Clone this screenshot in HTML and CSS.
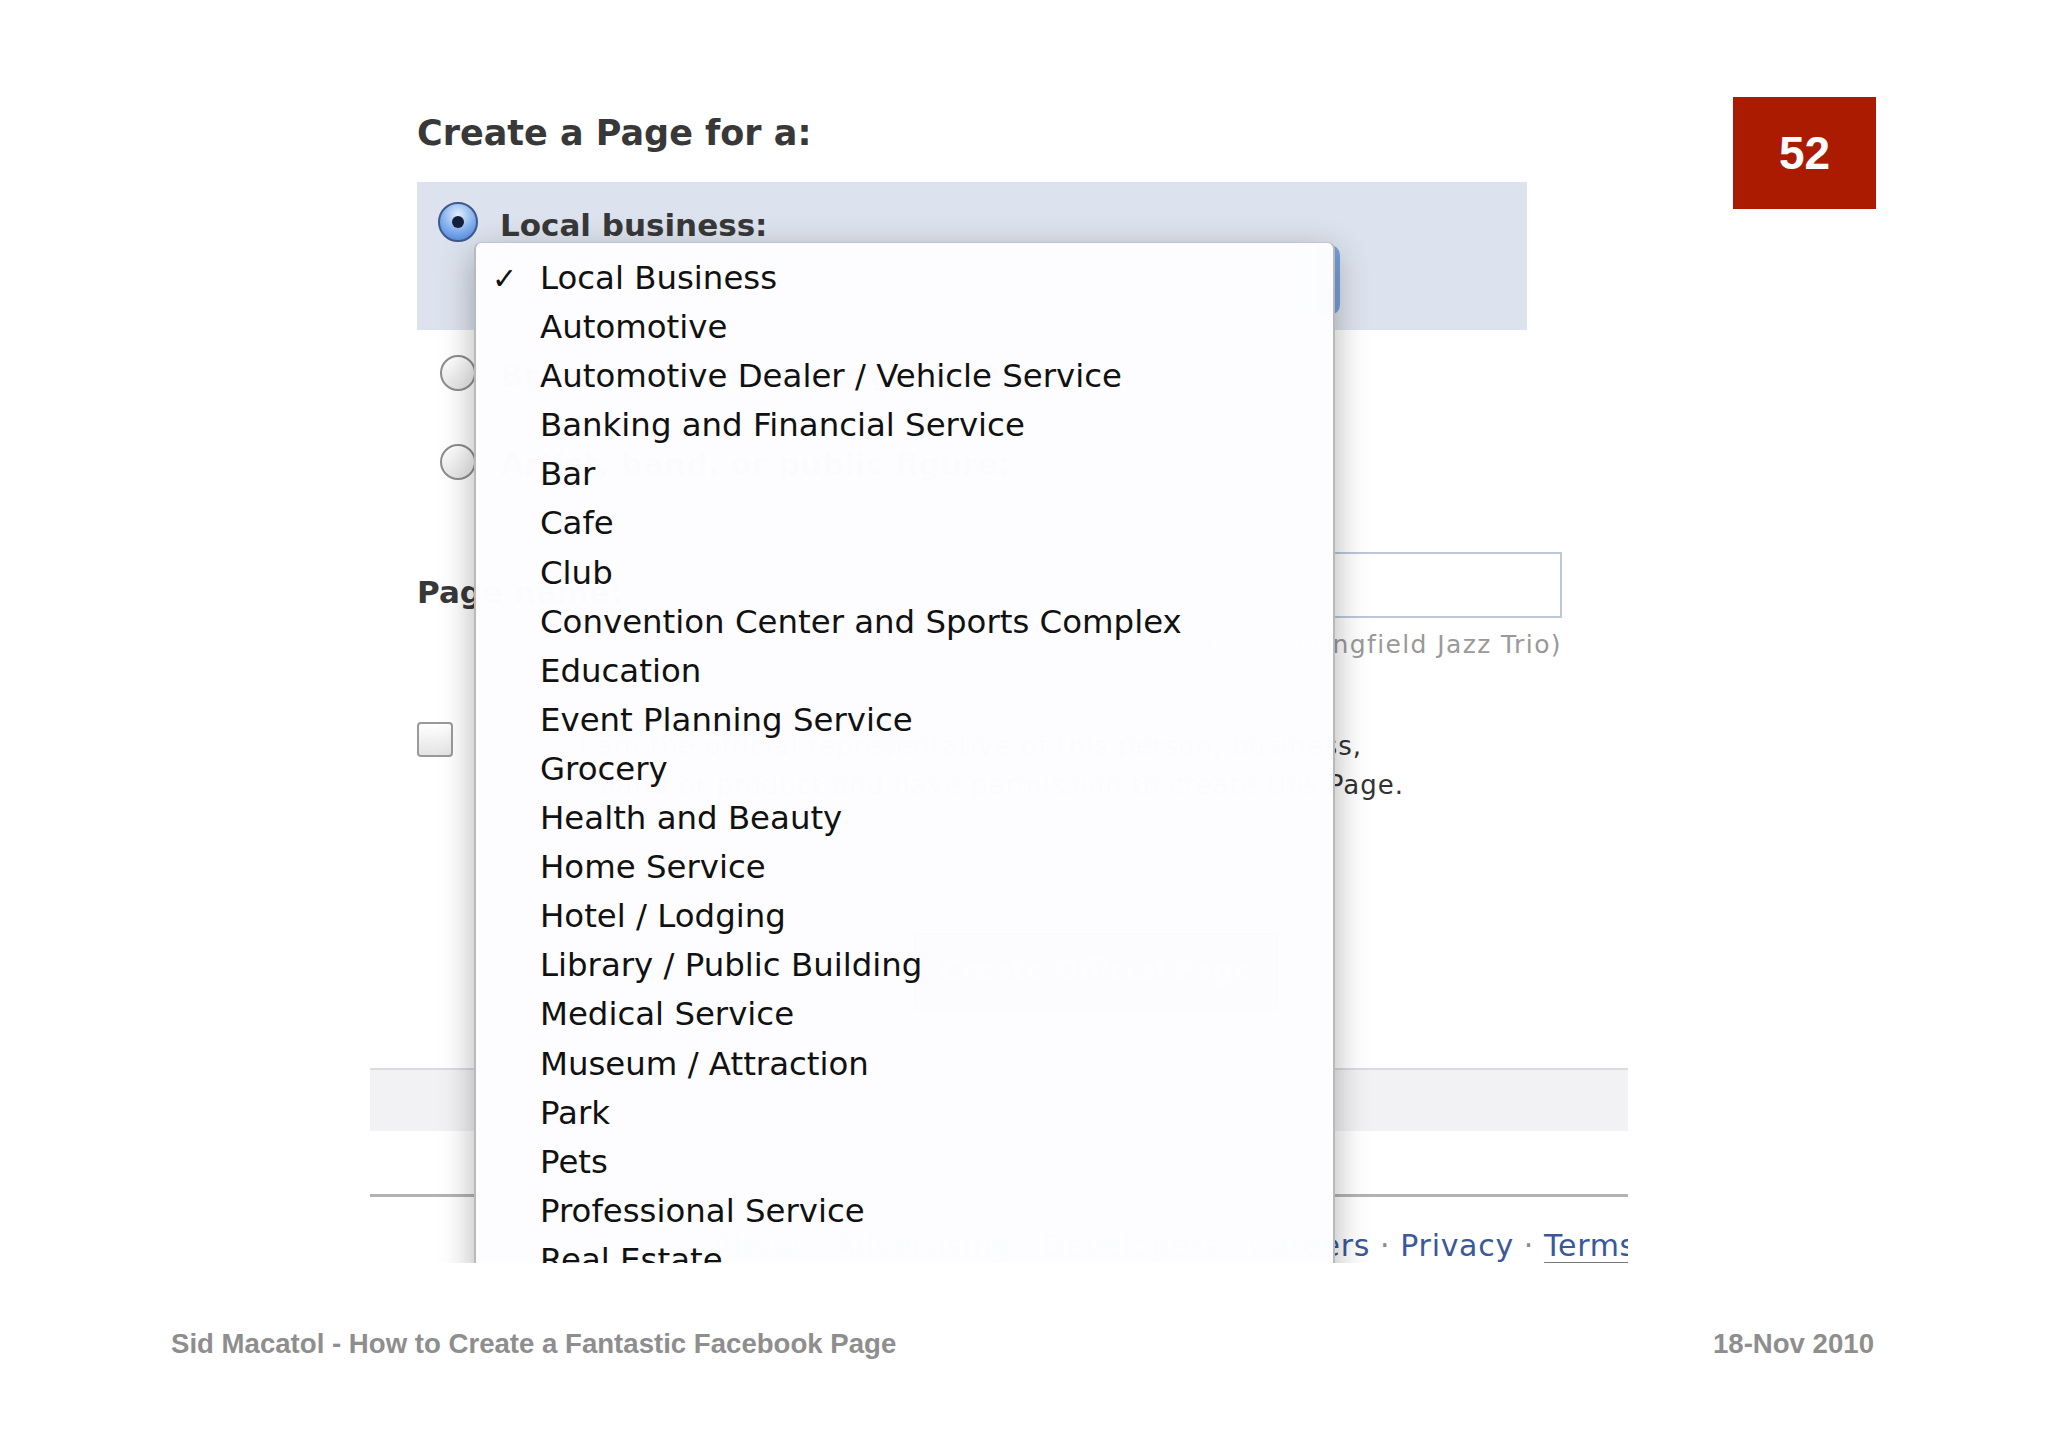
FILE: index.html
```html
<!DOCTYPE html>
<html lang="en">
<head>
<meta charset="utf-8">
<title>Create a Page for a</title>
<link rel="stylesheet" href="styles.css">
</head>
<body>
<div class="slide">
  <div class="shot">
    <div class="page-body">
      <h1 class="title">Create a Page for a:</h1>

      <div class="opt-selected">
        <div class="opt-row">
          <span class="radio radio-on"></span>
          <span class="opt-label">Local business:</span>
        </div>
        <div class="select"></div>
      </div>

      <div class="opt opt-first">
        <span class="radio"></span>
        <span class="opt-label">Brand, product, or organization:</span>
      </div>
      <div class="opt opt-second">
        <span class="radio"></span>
        <span class="opt-label">Artist, band, or public figure:</span>
      </div>

      <div class="field">
        <span class="field-label">Page name:</span>
        <div class="field-wrap">
          <div class="input"></div>
          <div class="hint">(e.g. Springfield Jazz Trio)</div>
        </div>
      </div>

      <div class="check-row">
        <span class="checkbox"></span>
        <div class="check-text">
          <span class="line line-1">I am the official representative of this person, business,</span>
          <span class="line line-2">band or product and have permission to create this Page.</span>
        </div>
      </div>

      <div class="button-row"><span class="btn">Create Official Page</span></div>
    </div>

    <div class="fb-band"></div>
    <div class="fb-rule"></div>
    <div class="fb-links">
      <a>About</a><span class="sep">·</span>
      <a>Advertising</a><span class="sep">·</span>
      <a>Developers</a><span class="sep">·</span>
      <a>Careers</a><span class="sep">·</span>
      <a>Privacy</a><span class="sep">·</span>
      <a class="u">Terms</a><span class="sep">·</span>
      <a>Help</a>
    </div>

    <ul class="menu">
      <li class="checked"><span class="check">✓</span>Local Business</li>
      <li>Automotive</li>
      <li>Automotive Dealer / Vehicle Service</li>
      <li>Banking and Financial Service</li>
      <li>Bar</li>
      <li>Cafe</li>
      <li>Club</li>
      <li>Convention Center and Sports Complex</li>
      <li>Education</li>
      <li>Event Planning Service</li>
      <li>Grocery</li>
      <li>Health and Beauty</li>
      <li>Home Service</li>
      <li>Hotel / Lodging</li>
      <li>Library / Public Building</li>
      <li>Medical Service</li>
      <li>Museum / Attraction</li>
      <li>Park</li>
      <li>Pets</li>
      <li>Professional Service</li>
      <li>Real Estate</li>
      <li>Religious Organization</li>
      <li>Restaurant</li>
    </ul>
  </div>

  <div class="badge">52</div>

  <div class="slide-footer">
    <span>Sid Macatol - How to Create a Fantastic Facebook Page</span>
    <span>18-Nov 2010</span>
  </div>
</div>
</body>
</html>
```

FILE: styles.css
```css
html, body {
  margin: 0;
  padding: 0;
  background: #ffffff;
}

.slide {
  position: relative;
  width: 2048px;
  height: 1447px;
  padding-top: 60px;
  box-sizing: border-box;
  background: #ffffff;
}

/* ---------- screenshot region ---------- */
.shot {
  position: relative;
  margin-left: 370px;
  width: 1258px;
  height: 1203px;
  overflow: hidden;
  background: #ffffff;
  font-family: "DejaVu Sans", "Liberation Sans", sans-serif;
  color: #333333;
}

.page-body {
  padding: 52px 0 0 47px;
}

.title {
  margin: 0;
  font-size: 35px;
  line-height: 42px;
  font-weight: bold;
  color: #383838;
}

.opt-selected {
  margin-top: 28px;
  width: 1110px;
  height: 148px;
  box-sizing: border-box;
  padding: 20px 0 0 21px;
  background: #dde3ee;
}

.opt-row {
  display: flex;
  align-items: flex-start;
  gap: 22px;
  height: 40px;
}

.opt-label {
  font-size: 31px;
  line-height: 40px;
  font-weight: bold;
  color: #383838;
  margin-top: 3px;
  white-space: nowrap;
}

.radio {
  position: relative;
  flex: none;
  width: 36px;
  height: 36px;
  box-sizing: border-box;
  border-radius: 50%;
  border: 2px solid #8d8d8d;
  background: linear-gradient(#ffffff, #e6e6e6);
}

.radio-on {
  width: 40px;
  height: 40px;
  border: 2px solid #3d5a8c;
  background: radial-gradient(circle at 50% 30%, #e3eefc 0, #8fb8f0 45%, #3f7ad8 100%);
}

.radio-on::after {
  content: "";
  position: absolute;
  left: 50%;
  top: 50%;
  width: 12px;
  height: 12px;
  margin: -6px 0 0 -6px;
  border-radius: 50%;
  background: #14203a;
}

.select {
  margin: 3px 0 0 36px;
  width: 866px;
  height: 70px;
  border-radius: 10px;
  background: linear-gradient(to right, #ffffff 0, #ffffff calc(100% - 40px), #8fb3e8 calc(100% - 40px), #76a0de 100%);
}

.opt {
  display: flex;
  align-items: center;
  gap: 24px;
  padding-left: 23px;
  height: 36px;
}

.opt-first { margin-top: 25px; }
.opt-second { margin-top: 53px; }

/* ---------- page name ---------- */
.field {
  display: flex;
  align-items: flex-start;
  margin-top: 72px;
}

.field-label {
  font-size: 31px;
  line-height: 40px;
  font-weight: bold;
  color: #383838;
  margin-top: 20px;
  white-space: nowrap;
}

.field-wrap {
  margin-left: auto;
  margin-right: 66px;
  width: 860px;
}

.input {
  height: 66px;
  box-sizing: border-box;
  border: 2px solid #bdc7d8;
  background: #ffffff;
}

.hint {
  margin-top: 12px;
  font-size: 25px;
  line-height: 30px;
  letter-spacing: 1.4px;
  color: #999999;
  text-align: right;
}

/* ---------- checkbox ---------- */
.check-row {
  display: flex;
  align-items: flex-start;
  margin-top: 62px;
}

.checkbox {
  flex: none;
  width: 36px;
  height: 35px;
  box-sizing: border-box;
  border: 2px solid #9a9a9a;
  border-radius: 4px;
  background: linear-gradient(#ffffff, #e4e4e4);
}

.check-text {
  margin: 5px 0 0 30px;
  width: 921px;
  font-size: 26px;
  line-height: 39px;
  letter-spacing: 1px;
  color: #333333;
}

.line {
  display: block;
  text-align: right;
  white-space: nowrap;
}

.line-1 { padding-right: 42px; }

.button-row {
  margin: 128px 0 0 497px;
}

.btn {
  display: inline-block;
  padding: 0 24px;
  height: 72px;
  line-height: 72px;
  font-size: 28px;
  font-weight: bold;
  color: #ffffff;
  background: #5b74a8;
  border: 2px solid #29447e;
}

/* ---------- facebook footer ---------- */
.fb-band {
  margin-top: 59px;
  height: 63px;
  box-sizing: border-box;
  border-top: 2px solid #dcdcdf;
  background: #f2f2f5;
}

.fb-rule {
  margin-top: 63px;
  height: 3px;
  background: #b3b3b3;
}

.fb-links {
  display: flex;
  margin-top: 31px;
  padding-left: 342px;
  font-size: 30px;
  line-height: 36px;
  letter-spacing: 0.7px;
  white-space: nowrap;
  color: #3b5998;
}

.fb-links a { color: #3b5998; }
.fb-links .u {
  text-decoration: underline;
  text-decoration-color: #7a7a7a;
  text-underline-offset: 6px;
}
.fb-links .sep {
  padding: 0 10px;
  color: #8a8a8a;
}

/* ---------- popup menu ---------- */
.menu {
  position: absolute;
  left: 104px;
  top: 182px;
  width: 861px;
  margin: 0;
  padding: 11px 0 0 0;
  box-sizing: border-box;
  list-style: none;
  background: rgba(253, 253, 255, 0.992);
  border: 2px solid #b9b9b9;
  border-top: 1px solid #c6c6c6;
  border-radius: 7px 7px 0 0;
  box-shadow: 0 10px 34px rgba(0, 0, 0, 0.3);
}

.menu li {
  position: relative;
  padding-left: 64px;
  height: 49.1px;
  line-height: 49.1px;
  font-size: 32.4px;
  color: #111111;
  white-space: nowrap;
}

.menu .check {
  position: absolute;
  left: 16px;
  top: 0;
  font-size: 30px;
  font-weight: bold;
  color: #111111;
}

/* ---------- slide chrome ---------- */
.badge {
  position: absolute;
  left: 1733px;
  top: 97px;
  width: 143px;
  height: 112px;
  background: #ab1b02;
  color: #ffffff;
  font-family: "Liberation Sans", Arial, sans-serif;
  font-weight: bold;
  font-size: 46px;
  line-height: 112px;
  text-align: center;
}

.slide-footer {
  display: flex;
  justify-content: space-between;
  margin-top: 65px;
  padding: 0 174px 0 171px;
  font-family: "Liberation Sans", Arial, sans-serif;
  font-weight: bold;
  font-size: 27.6px;
  line-height: 32px;
  color: #8e8e8e;
}
```
